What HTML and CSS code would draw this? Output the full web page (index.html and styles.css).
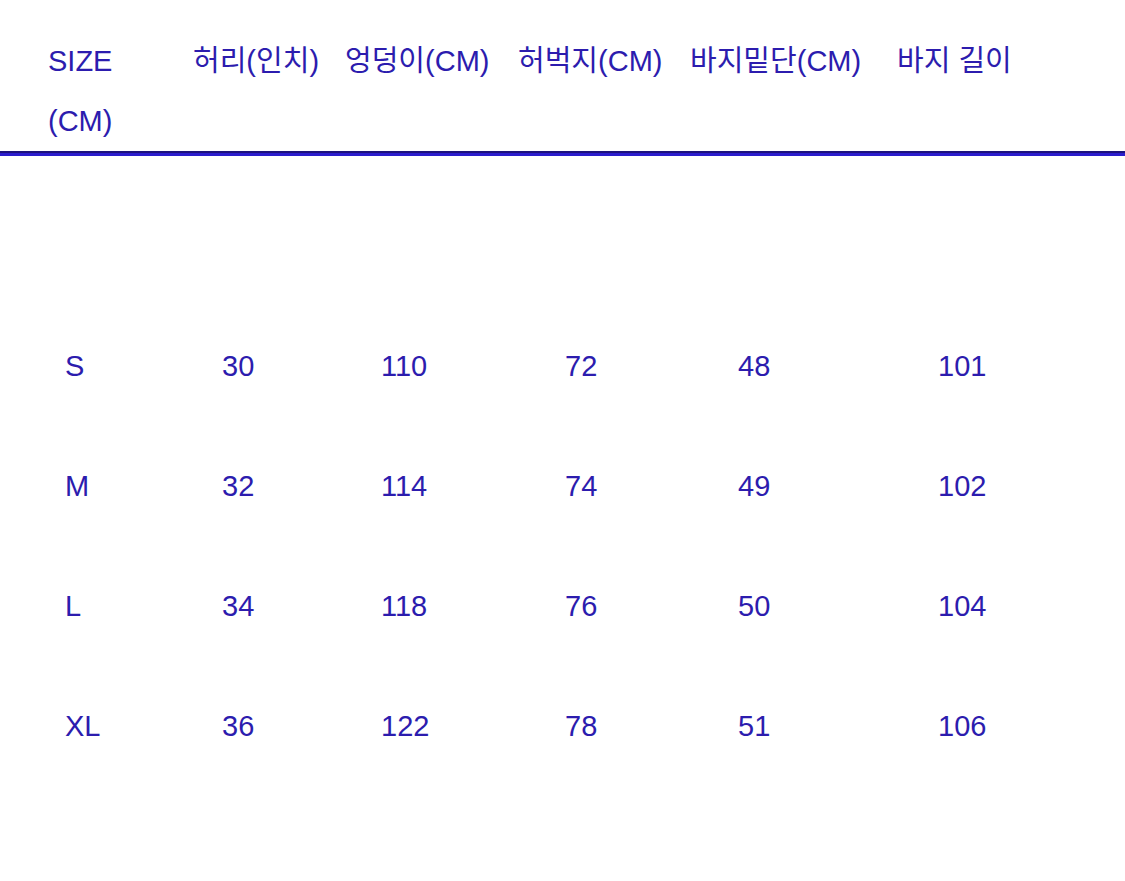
FILE: index.html
```html
<!DOCTYPE html>
<html lang="ko">
<head>
<meta charset="utf-8">
<title>Size chart</title>
<link rel="stylesheet" href="styles.css">
</head>
<body>
<div class="chart">
  <div class="head">
    <div class="hcell first">SIZE (CM)</div>
    <div class="hcell">허리(인치)</div>
    <div class="hcell">엉덩이(CM)</div>
    <div class="hcell">허벅지(CM)</div>
    <div class="hcell">바지밑단(CM)</div>
    <div class="hcell">바지 길이</div>
  </div>
  <div class="rule"></div>
  <div class="rows">
    <div class="row"><span>S</span><span>30</span><span>110</span><span>72</span><span>48</span><span>101</span></div>
    <div class="row"><span>M</span><span>32</span><span>114</span><span>74</span><span>49</span><span>102</span></div>
    <div class="row"><span>L</span><span>34</span><span>118</span><span>76</span><span>50</span><span>104</span></div>
    <div class="row"><span>XL</span><span>36</span><span>122</span><span>78</span><span>51</span><span>106</span></div>
  </div>
</div>
</body>
</html>
```
FILE: styles.css
```css
html, body {
  margin: 0;
  padding: 0;
  background: #ffffff;
}
.chart {
  font-family: "Liberation Sans", Arial, "Noto Sans CJK KR", sans-serif;
  font-size: 29px;
  color: #2c1cae;
  padding-top: 31px;
}
.head {
  display: grid;
  grid-template-columns: 145px 152px 173px 172px 207px 1fr;
  padding-left: 48px;
  line-height: 60px;
  height: 120px;
}
.hcell {
  white-space: nowrap;
}
.hcell.first {
  white-space: normal;
  max-width: 80px;
}
.rule {
  height: 0;
  border-top: 2px solid #1d117e;
  border-bottom: 3px solid #2b1ccc;
}
.rows {
  margin-top: 150px;
}
.row {
  display: grid;
  grid-template-columns: 157px 159px 184px 173px 200px 1fr;
  padding-left: 65px;
  line-height: 120px;
  height: 120px;
}
```
